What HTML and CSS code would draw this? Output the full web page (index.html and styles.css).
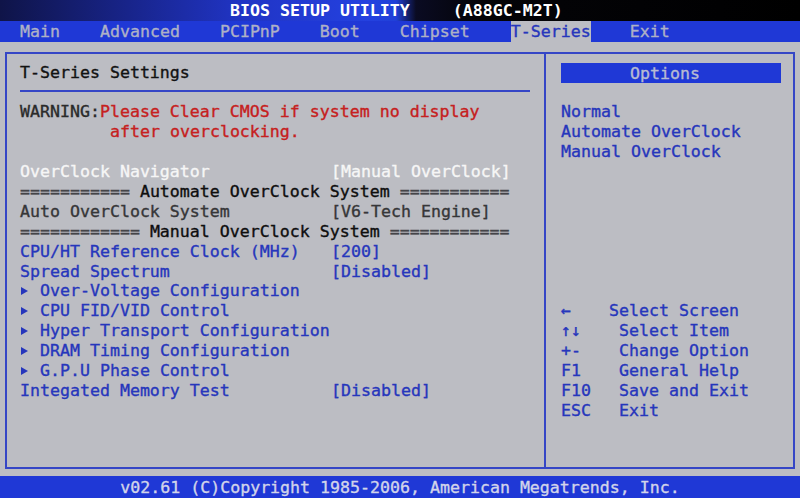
FILE: index.html
```html
<!DOCTYPE html>
<html lang="en">
<head>
<meta charset="utf-8">
<title>BIOS SETUP UTILITY</title>
<link rel="stylesheet" href="styles.css">
</head>
<body>
<div class="screen">
  <header class="title">
    <span class="t-name">BIOS SETUP UTILITY</span>
    <span class="t-model">(A88GC-M2T)</span>
  </header>
  <nav class="menu">
    <span class="tab">Main</span>
    <span class="tab">Advanced</span>
    <span class="tab">PCIPnP</span>
    <span class="tab">Boot</span>
    <span class="tab">Chipset</span>
    <span class="tab active">T-Series</span>
    <span class="tab">Exit</span>
  </nav>
  <main class="main">
    <div class="box">
      <section class="left">
        <div class="row heading">T-Series Settings</div>
        <div class="row rule"><span class="rule-line"></span></div>
        <div class="row"><span class="warn">WARNING:</span><span class="red">Please Clear CMOS if system no display</span></div>
        <div class="row red indent">after overclocking.</div>
        <div class="row"></div>
        <div class="row white"><span class="label">OverClock Navigator</span><span>[Manual OverClock]</span></div>
        <div class="row sep"><span class="eq">=========== </span><span class="sep-title">Automate OverClock System</span><span class="eq"> ===========</span></div>
        <div class="row dim"><span class="label">Auto OverClock System</span><span>[V6-Tech Engine]</span></div>
        <div class="row sep"><span class="eq">============ </span><span class="sep-title">Manual OverClock System</span><span class="eq"> ============</span></div>
        <div class="row blue"><span class="label">CPU/HT Reference Clock (MHz)</span><span>[200]</span></div>
        <div class="row blue"><span class="label">Spread Spectrum</span><span>[Disabled]</span></div>
        <div class="row blue"><span class="tri"></span><span>Over-Voltage Configuration</span></div>
        <div class="row blue"><span class="tri"></span><span>CPU FID/VID Control</span></div>
        <div class="row blue"><span class="tri"></span><span>Hyper Transport Configuration</span></div>
        <div class="row blue"><span class="tri"></span><span>DRAM Timing Configuration</span></div>
        <div class="row blue"><span class="tri"></span><span>G.P.U Phase Control</span></div>
        <div class="row blue"><span class="label">Integated Memory Test</span><span>[Disabled]</span></div>
      </section>
      <aside class="right">
        <div class="options">Options</div>
        <div class="row"></div>
        <div class="row blue">Normal</div>
        <div class="row blue">Automate OverClock</div>
        <div class="row blue">Manual OverClock</div>
        <div class="row"></div>
        <div class="row"></div>
        <div class="row"></div>
        <div class="row"></div>
        <div class="row"></div>
        <div class="row"></div>
        <div class="row"></div>
        <div class="row blue"><span class="key key-short">&larr;</span><span>Select Screen</span></div>
        <div class="row blue"><span class="key">&uarr;&darr;</span><span>Select Item</span></div>
        <div class="row blue"><span class="key">+-</span><span>Change Option</span></div>
        <div class="row blue"><span class="key">F1</span><span>General Help</span></div>
        <div class="row blue"><span class="key">F10</span><span>Save and Exit</span></div>
        <div class="row blue"><span class="key">ESC</span><span>Exit</span></div>
      </aside>
    </div>
  </main>
  <footer class="footer">v02.61 (C)Copyright 1985-2006, American Megatrends, Inc.</footer>
</div>
</body>
</html>
```

FILE: styles.css
```css
:root {
  --row: 19.92px;
  --gray: #bcbdc3;
  --bar: #1f38d6;
  --line: #3546c6;
  --blue: #2636bc;
  --red: #c62020;
  --dim: #363638;
  --black: #121212;
  --white: #f6f6f6;
  --menu-text: #aeb1c6;
}

* { box-sizing: border-box; }

html, body {
  margin: 0;
  padding: 0;
  background: #000;
}

body {
  font-family: "DejaVu Sans Mono", "Liberation Mono", monospace;
  font-size: 16.6px;
  line-height: var(--row);
  -webkit-text-stroke: 0.35px currentColor;
}

.screen {
  width: 800px;
  height: 498px;
  display: flex;
  flex-direction: column;
  overflow: hidden;
}

/* title */
.title {
  height: 21px;
  line-height: 22px;
  display: flex;
  gap: 43px;
  padding-left: 230px;
  color: #fff;
  font-weight: bold;
  -webkit-text-stroke: 0;
  background: linear-gradient(to right, #0f1448 0%, #18248a 16%, #2034c4 30%, #2441e0 46%, #2040d8 49.5%, #0a0b22 52%, #040408 60%, #000 100%);
  white-space: pre;
}

/* menu */
.menu {
  height: 21px;
  line-height: 22px;
  display: flex;
  gap: 40px;
  padding-left: 20px;
  background: var(--bar);
  color: var(--menu-text);
}

.tab { white-space: pre; }

.tab.active {
  background: var(--gray);
  color: var(--blue);
  margin-left: 1px;
  margin-right: -1px;
}

/* main */
.main {
  height: 434px;
  background: var(--gray);
  padding: 10px 5px 7px 5px;
  display: flex;
}

.box {
  flex: 1;
  display: flex;
  border: 2px solid var(--line);
}

.left {
  width: 537px;
  padding: 8.5px 0 0 13px;
}

.right {
  flex: 1;
  border-left: 2px solid var(--line);
  padding: 8.5px 0 0 13px;
}

.row {
  height: var(--row);
  display: flex;
  align-items: center;
  white-space: pre;
}

.heading { color: var(--black); }

.rule-line {
  display: block;
  width: 510px;
  height: 2px;
  margin-top: -3px;
  background: var(--line);
}

.warn { color: #2a2a2a; }
.red { color: var(--red); }
.indent { padding-left: 90px; }

.white { color: var(--white); }
.dim { color: var(--dim); }
.blue { color: var(--blue); }

.label { width: 311px; flex: none; }

.sep .eq { color: #444448; }
.sep-title { color: #0e0e0e; }

.tri {
  width: 0;
  height: 0;
  border-left: 7px solid var(--blue);
  border-top: 4px solid transparent;
  border-bottom: 4px solid transparent;
  margin-left: 1px;
  margin-right: 12px;
  flex: none;
}

/* right panel */
.options {
  width: 220px;
  height: 20px;
  line-height: 21px;
  margin: 0.5px 0 -0.58px 2px;
  padding-left: 69px;
  background: var(--bar);
  color: #b7bbd2;
}

.right .row { padding-left: 2px; }

.key { width: 58px; flex: none; }
.key-short { width: 48px; }

/* footer */
.footer {
  height: 22px;
  line-height: 23px;
  background: var(--bar);
  color: #d2d4ea;
  text-align: center;
  white-space: pre;
}
```
